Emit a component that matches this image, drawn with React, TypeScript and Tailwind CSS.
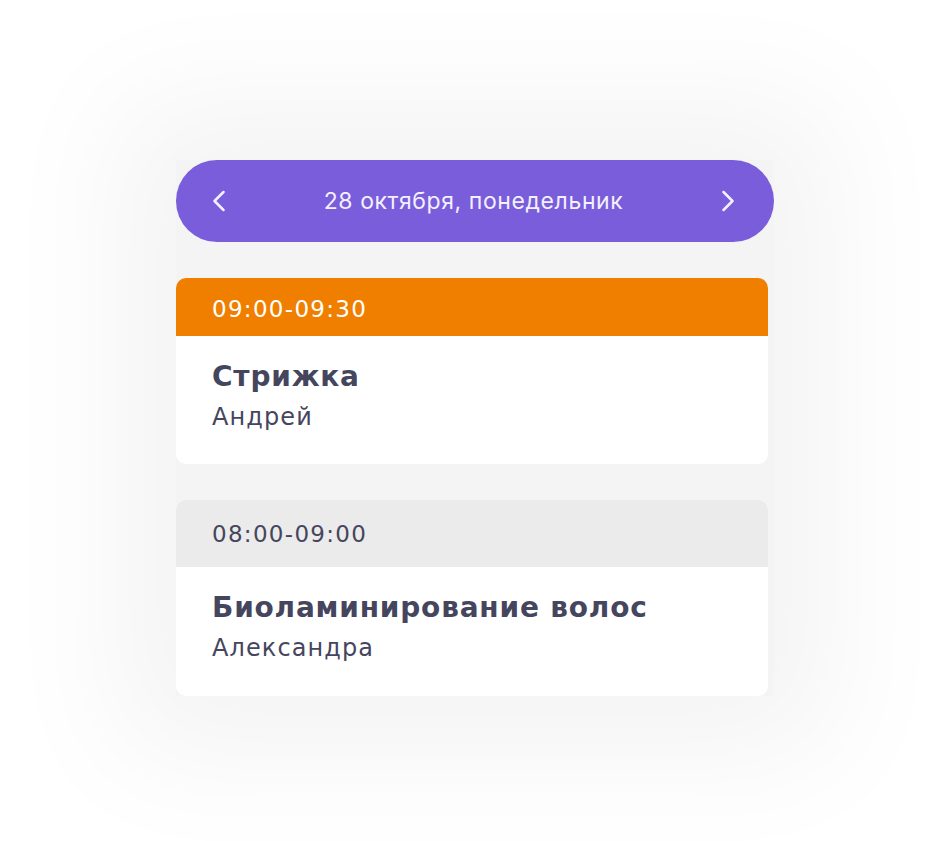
import { ChevronLeft, ChevronRight } from 'lucide-react';

interface Booking {
    time: string;
    service: string;
    master: string;
    active?: boolean;
}

const bookings: Booking[] = [
    { time: '09:00-09:30', service: 'Стрижка', master: 'Андрей', active: true },
    { time: '08:00-09:00', service: 'Биоламинирование волос', master: 'Александра' },
];

function BookingCard({ booking }: { booking: Booking }) {
    return (
        <div className="w-[592px] rounded-[10px] bg-white overflow-hidden font-['DejaVu_Sans',sans-serif]">
            {/* Time header */}
            <div
                className={
                    booking.active
                        ? 'h-[58px] flex items-center px-9 pt-[5px] bg-[#f07f00] text-white'
                        : 'h-[67px] flex items-center px-9 pt-[1px] bg-[#ebebeb] text-[#45465e]'
                }
            >
                <span className="text-[23px] tracking-[1.3px]">{booking.time}</span>
            </div>

            {/* Service + master */}
            <div className="px-9 pt-[23px] pb-[31px] text-[#45465e]">
                <div className="text-[28px] font-bold leading-[36px] tracking-[0.8px]">{booking.service}</div>
                <div className="text-[24px] leading-[34px] mt-[5px] tracking-[1.1px]">{booking.master}</div>
            </div>
        </div>
    );
}

export default function App() {
    return (
        <div className="min-h-screen w-full bg-white flex justify-center pt-[160px] overflow-hidden">
            <div className="w-[598px] h-[536px] bg-[#f4f4f4] shadow-[0_0_120px_60px_#f4f4f4] flex flex-col gap-9">
                {/* Date switcher */}
                <div className="h-[82px] rounded-full bg-[#795ddb] flex items-center justify-between pl-[25px] pr-[28px] text-[#f3f0ff]">
                    <ChevronLeft className="w-9 h-9" strokeWidth={1.7} />
                    <span className="text-[23px] tracking-[0.6px] font-['Inter',sans-serif]">28 октября, понедельник</span>
                    <ChevronRight className="w-9 h-9" strokeWidth={1.7} />
                </div>

                {bookings.map((b) => (
                    <BookingCard key={b.time} booking={b} />
                ))}
            </div>
        </div>
    );
}
